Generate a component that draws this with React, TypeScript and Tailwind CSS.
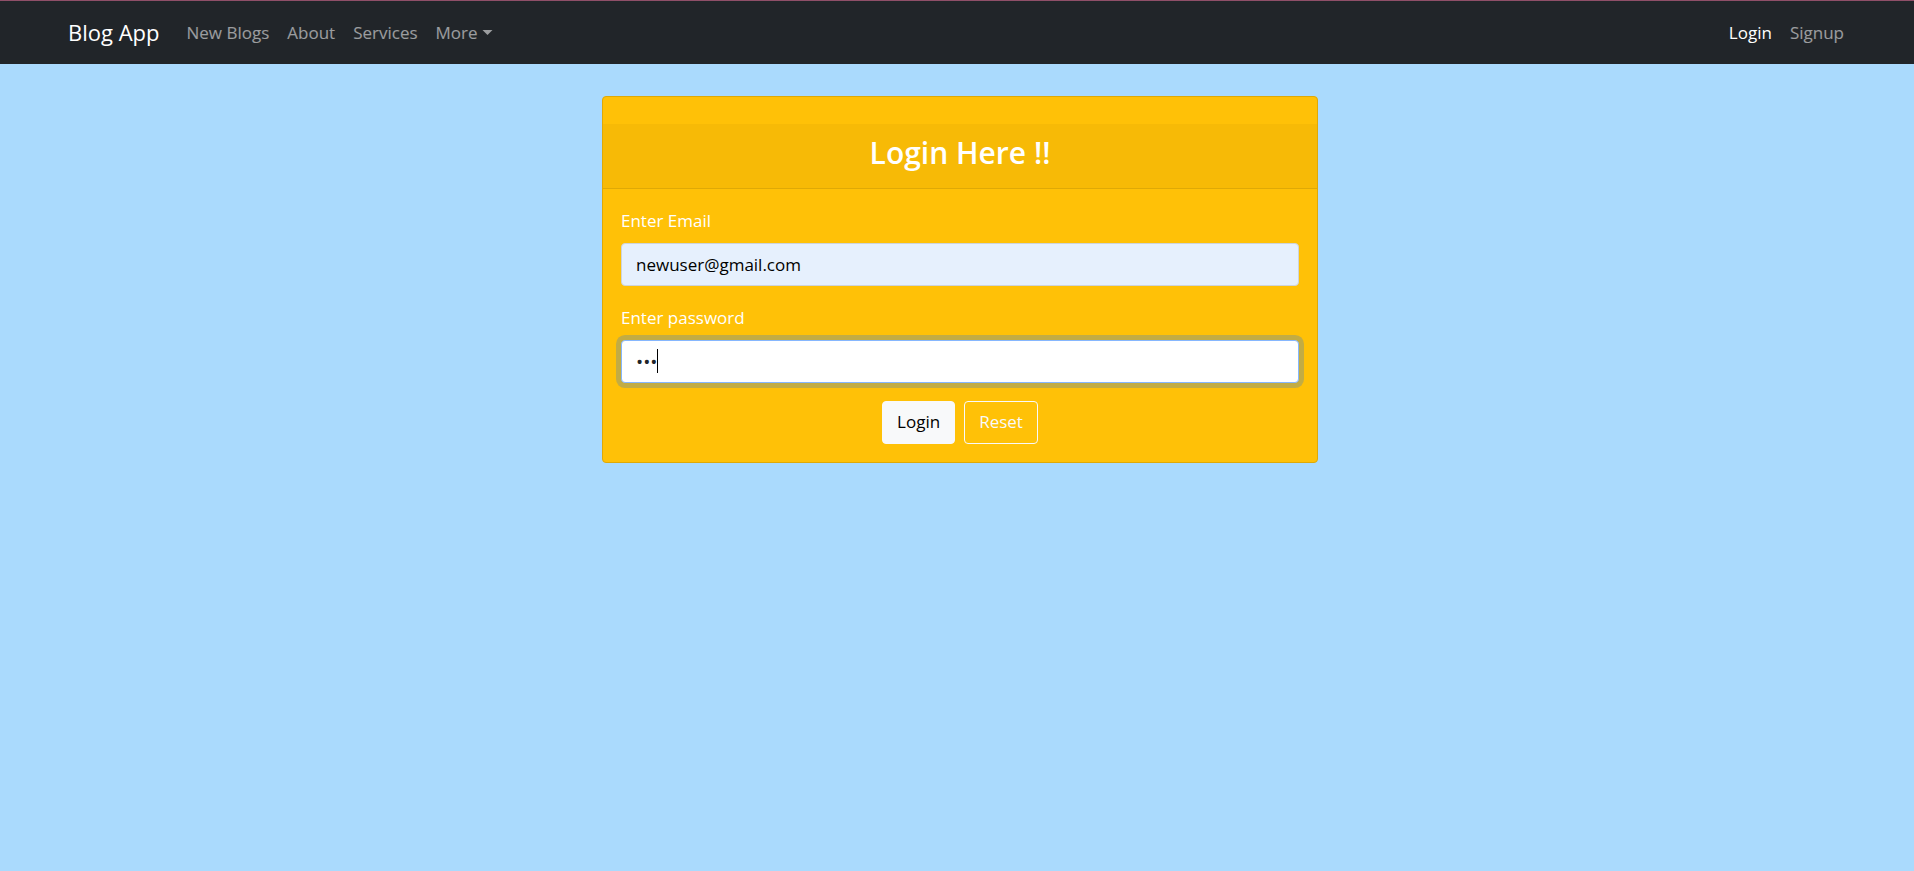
import React from "react";

const mainLinks = ["New Blogs", "About", "Services"];

function Navbar() {
  return (
    <header className="border-t border-[#8f4f68] bg-[#212529]">
      <nav className="flex min-h-[63px] flex-wrap items-center pr-[70px] pl-[68px] text-[17px] leading-[27px]">
        <a href="#home" className="mr-[18px] text-[22px] text-white">
          Blog App
        </a>
        <ul className="flex flex-wrap">
          {mainLinks.map((label) => (
            <li key={label}>
              <a href="#nav" className="block px-[9px] text-white/55">
                {label}
              </a>
            </li>
          ))}
          <li>
            <button type="button" className="flex items-center gap-1 px-[9px] text-white/55">
              More
              <svg width="11" height="6" viewBox="0 0 11 6" fill="currentColor" aria-hidden="true">
                <path d="M.5 0h10l-5 5z" />
              </svg>
            </button>
          </li>
        </ul>
        <ul className="ml-auto flex">
          <li>
            <a href="#login" className="block px-[9px] text-white">
              Login
            </a>
          </li>
          <li>
            <a href="#signup" className="block pl-[9px] text-white/55">
              Signup
            </a>
          </li>
        </ul>
      </nav>
    </header>
  );
}

function LoginCard() {
  return (
    <section className="w-full max-w-[716px] rounded border border-[#dfa906] bg-[#ffc107] pt-[27px] text-white">
      <div className="border-b border-[#dfa906] bg-black/3 px-[18px] pt-[11px] pb-[17px] text-center">
        <h1 className="text-[30px] leading-9 font-semibold">Login Here !!</h1>
      </div>
      <form className="flex flex-col gap-[18px] p-[18px] text-[17px] leading-[27px]" onSubmit={(e) => e.preventDefault()}>
        <div className="flex flex-col gap-[9px]">
          <label htmlFor="email">Enter Email</label>
          <input
            id="email"
            type="email"
            defaultValue="newuser@gmail.com"
            className="h-[43px] w-full rounded border border-[#ced4da] bg-[#e6f0fd] px-[14px] text-black outline-none"
          />
        </div>
        <div className="flex flex-col gap-[9px]">
          <label htmlFor="password">Enter password</label>
          <div className="relative">
            <input
              id="password"
              type="password"
              autoFocus
              defaultValue="abc"
              className="block h-[43px] w-full rounded border border-[#86b7fe] bg-white px-[14px] text-[19px] text-[#212529] caret-transparent ring-[5px] ring-[#0d6efd]/25 outline-none"
            />
            <span className="pointer-events-none absolute top-[9px] left-9 h-6 w-px bg-black" aria-hidden="true" />
          </div>
        </div>
        <div className="flex justify-center gap-[9px]">
          <button type="submit" className="h-[43px] rounded border border-[#f8f9fa] bg-[#f8f9fa] px-[14px] pb-0.5 text-black">
            Login
          </button>
          <button type="reset" className="h-[43px] rounded border border-[#f8f9fa] px-[14px] pb-0.5 text-[#f8f9fa]">
            Reset
          </button>
        </div>
      </form>
    </section>
  );
}

export default function App() {
  return (
    <div className="min-h-screen bg-[#aadafd] font-['Open_Sans','Noto_Sans',sans-serif]">
      <Navbar />
      <main className="flex justify-center pt-8 pl-1.5">
        <LoginCard />
      </main>
    </div>
  );
}
